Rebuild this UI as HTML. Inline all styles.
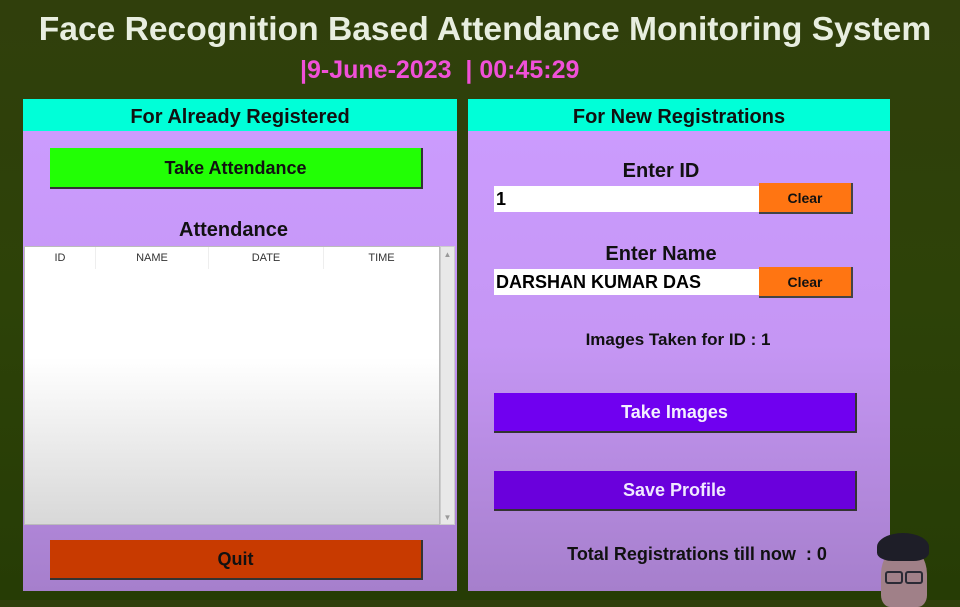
<!DOCTYPE html>
<html><head><meta charset="utf-8"><style>
*{margin:0;padding:0;box-sizing:border-box}
body{width:960px;height:600px;overflow:hidden;background:linear-gradient(180deg,#303f0c 0%,#2d4208 50%,#263c05 100%);font-family:"Liberation Sans",Arial,sans-serif;position:relative}
.a{position:absolute}
.t{left:0;width:970px;top:11px;text-align:center;color:#e8eee0;font-size:33.6px;font-weight:bold}
.d{left:300px;top:56px;color:#f050d8;font-size:25px;font-weight:bold}
.p{background:linear-gradient(180deg,#cc9cff 0%,#c596f4 50%,#a67fcc 100%)}
.h{background:#00ffd8;text-align:center;font-weight:bold;font-size:20px;line-height:32px;padding-top:2px;height:32px;color:#111}
.btn{text-align:center;font-weight:bold;border-right:2px solid #333;border-bottom:2px solid #333}
.lbl{text-align:center;font-weight:bold;color:#111}
.in{background:#fff;font-weight:bold;font-size:18px;color:#000;padding-left:2px;line-height:26px}
.clr{background:#ff7512;font-weight:bold;font-size:14px;text-align:center;line-height:30px;border-right:2px solid #444;border-bottom:2px solid #444;color:#111}
.th{top:0;height:22px;line-height:22px;font-size:11px;color:#333;text-align:center;border-right:1px solid #eee}
</style></head><body>
<div class="a t">Face Recognition Based Attendance Monitoring System</div>
<div class="a d">|9-June-2023 &nbsp;| 00:45:29</div>

<div class="a p" style="left:23px;top:99px;width:434px;height:492px">
 <div class="h">For Already Registered</div>
 <div class="a btn" style="left:27px;top:49px;width:373px;height:41px;background:#22ff05;font-size:18px;line-height:40px;color:#111">Take Attendance</div>
 <div class="a lbl" style="left:0;width:421px;top:120px;font-size:20px">Attendance</div>
 <div class="a" style="left:1px;top:147px;width:416px;height:279px;background:linear-gradient(180deg,#fff 0%,#fff 40%,#d8d8d8 100%);border:1px solid #bbb">
  <div class="a th" style="left:0;width:71px">ID</div>
  <div class="a th" style="left:71px;width:113px">NAME</div>
  <div class="a th" style="left:184px;width:115px">DATE</div>
  <div class="a th" style="left:299px;width:115px;border:0">TIME</div>
 </div>
 <div class="a" style="left:417px;top:147px;width:15px;height:279px;background:#e8e8e8;border:1px solid #ccc;color:#999;font-size:8px;text-align:center"><div style="margin-top:3px">▲</div><div class="a" style="bottom:2px;width:13px">▼</div></div>
 <div class="a btn" style="left:27px;top:441px;width:373px;height:40px;background:#c83a00;font-size:18px;line-height:39px;color:#111">Quit</div>
</div>

<div class="a p" style="left:468px;top:99px;width:422px;height:492px">
 <div class="h">For New Registrations</div>
 <div class="a lbl" style="left:0;width:386px;top:61px;font-size:20px">Enter ID</div>
 <div class="a in" style="left:26px;top:87px;width:265px;height:26px">1</div>
 <div class="a clr" style="left:291px;top:84px;width:94px;height:31px">Clear</div>
 <div class="a lbl" style="left:0;width:386px;top:144px;font-size:20px">Enter Name</div>
 <div class="a in" style="left:26px;top:170px;width:265px;height:26px">DARSHAN KUMAR DAS</div>
 <div class="a clr" style="left:291px;top:168px;width:94px;height:31px">Clear</div>
 <div class="a lbl" style="left:0;width:420px;top:231px;font-size:17px">Images Taken for ID : 1</div>
 <div class="a btn" style="left:26px;top:294px;width:363px;height:40px;background:#7000f0;color:#f4f0ff;font-size:18px;line-height:39px">Take Images</div>
 <div class="a btn" style="left:26px;top:372px;width:363px;height:40px;background:#6a00dc;color:#f0e8ff;font-size:18px;line-height:39px">Save Profile</div>
 <div class="a lbl" style="left:0;width:458px;top:445px;font-size:18px">Total Registrations till now &nbsp;: 0</div>
</div>

<div class="a" style="left:881px;top:547px;width:46px;height:60px;border-radius:45% 45% 20% 20%;background:#a08088"></div>
<div class="a" style="left:877px;top:533px;width:52px;height:28px;border-radius:50% 50% 30% 30%;background:#1e1e28"></div>
<div class="a" style="left:885px;top:571px;width:18px;height:13px;border:2px solid #2a2a35;border-radius:3px"></div>
<div class="a" style="left:905px;top:571px;width:18px;height:13px;border:2px solid #2a2a35;border-radius:3px"></div>
</body></html>
